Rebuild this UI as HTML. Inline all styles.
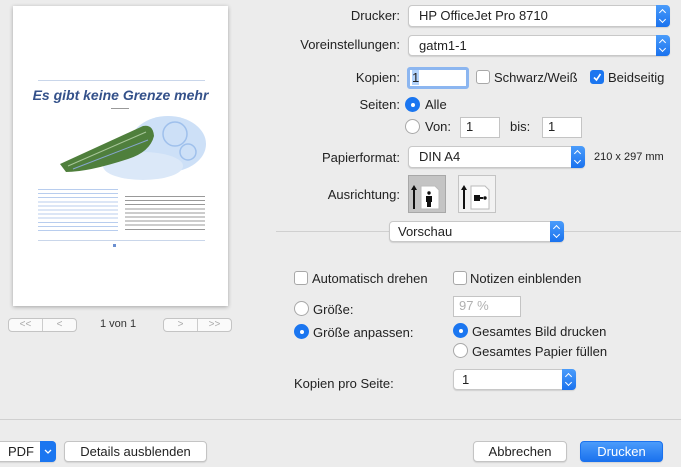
<!DOCTYPE html>
<html><head><meta charset="utf-8"><style>
*{box-sizing:border-box;margin:0;padding:0}
body{width:681px;height:467px;background:#ececec;font-family:"Liberation Sans",sans-serif;font-size:13px;color:#222;position:relative;overflow:hidden}
.a{position:absolute}
.lbl{position:absolute;text-align:right;white-space:nowrap}
.pop{position:absolute;background:#fff;border:1px solid #c8c8c8;border-radius:4px;box-shadow:0 1px 1px rgba(0,0,0,.12);padding-left:10px;line-height:19px;white-space:nowrap}
.pop .ar{position:absolute;right:-1px;top:-1px;bottom:-1px;width:14px;background:linear-gradient(#4a9cfb,#1a72ee);border-radius:0 4px 4px 0}
.pop .ar:before,.pop .ar:after{content:"";position:absolute;left:4px;width:4px;height:4px;border-left:1.3px solid #fff;border-top:1.3px solid #fff}
.pop .ar:before{top:5px;transform:rotate(45deg)}
.pop .ar:after{bottom:5px;transform:rotate(-135deg)}
.inp{position:absolute;background:#fff;border:1px solid #c4c4c4;padding-left:5px;line-height:18px}
.cb{position:absolute;width:14px;height:14px;border:1px solid #a8a8a8;border-radius:3px;background:#fff}
.cb.on{background:#1b76f0;border-color:#1b76f0}
.rd{position:absolute;width:15px;height:15px;border:1px solid #a8a8a8;border-radius:50%;background:#fff}
.rd.on{background:#1b76f0;border-color:#1b76f0}
.rd.on:after{content:"";position:absolute;left:4.5px;top:4.5px;width:4px;height:4px;border-radius:50%;background:#fff}
.btn{position:absolute;background:#fff;border:1px solid #c4c4c4;border-radius:4px;text-align:center;line-height:19px;box-shadow:0 1px 1px rgba(0,0,0,.1)}
.sep{position:absolute;height:1px;background:#d0d0d0}
.nav{position:absolute;height:14px;border:1px solid #c4c4c4;border-radius:4px;background:#fafafa;display:flex;color:#aaa;font-size:10px;line-height:12px}
.nav span{flex:1;text-align:center}
.nav span+span{border-left:1px solid #ccc}
</style></head><body>

<div class="a" style="left:13px;top:6px;width:215px;height:300px;background:#fff;box-shadow:0 1px 4px rgba(0,0,0,.3)">
 <div class="a" style="left:25px;top:74px;width:167px;height:1px;background:#c9d6ea"></div>
 <div class="a" style="left:0;width:215px;top:81px;text-align:center;color:#34518a;font-size:14px;font-weight:bold;font-style:italic">Es gibt keine Grenze mehr</div>
 <div class="a" style="left:98px;top:102px;width:18px;height:1px;background:#999"></div>
 <svg class="a" style="left:45px;top:108px" width="150" height="70">
  <ellipse cx="110" cy="30" rx="38" ry="28" fill="#cde0f7"/>
  <ellipse cx="85" cy="52" rx="40" ry="14" fill="#dbe8f8"/>
  <circle cx="117" cy="20" r="12" fill="none" stroke="#9fc0ec" stroke-width="1.5"/>
  <circle cx="130" cy="38" r="8" fill="none" stroke="#9fc0ec" stroke-width="1.5"/>
  <path d="M2 50 L85 12 Q95 10 96 22 Q92 38 70 45 Q30 58 8 58Z" fill="#4f7f3c"/>
  <path d="M10 52 L88 18" stroke="#a8c79a" stroke-width="1"/>
  <path d="M15 55 L90 26" stroke="#86a6d0" stroke-width="1"/>
 </svg>
 <div class="a" style="left:25px;top:183px;width:80px;height:45px;background:repeating-linear-gradient(#b8cdee 0 1px,transparent 1px 4.1px)"></div>
 <div class="a" style="left:112px;top:190px;width:80px;height:34px;background:repeating-linear-gradient(#999 0 1px,transparent 1px 4.1px)"></div>
 <div class="a" style="left:25px;top:234px;width:167px;height:1px;background:#c9d6ea"></div>
 <div class="a" style="left:100px;top:238px;width:3px;height:3px;background:#6b8fd0"></div>
</div>
<div class="nav" style="left:8px;top:318px;width:69px"><span>&lt;&lt;</span><span>&lt;</span></div>
<div class="a" style="left:100px;top:318px;font-size:11px;color:#333">1 von 1</div>
<div class="nav" style="left:163px;top:318px;width:69px"><span>&gt;</span><span>&gt;&gt;</span></div>

<div class="lbl" style="right:281px;top:8px">Drucker:</div>
<div class="pop" style="left:408px;top:5px;width:262px;height:22px">HP OfficeJet Pro 8710<div class="ar"></div></div>
<div class="lbl" style="right:281px;top:37px">Voreinstellungen:</div>
<div class="pop" style="left:408px;top:35px;width:262px;height:21px">gatm1-1<div class="ar"></div></div>

<div class="lbl" style="right:281px;top:70px">Kopien:</div>
<div class="inp" style="left:407px;top:67px;width:62px;height:22px;border:3px solid #8cb6f0;border-radius:3px;padding-left:2px;line-height:16px"><span style="background:#b3d3fb">1</span></div>
<div class="cb" style="left:476px;top:70px"></div>
<div class="a" style="left:494px;top:70px">Schwarz/Weiß</div>
<div class="cb on" style="left:590px;top:70px"><svg width="12" height="12" style="position:absolute;left:0;top:0"><path d="M3 6.5 L5.5 9 L9.5 3" stroke="#fff" stroke-width="1.6" fill="none"/></svg></div>
<div class="a" style="left:608px;top:70px">Beidseitig</div>

<div class="lbl" style="right:281px;top:97px">Seiten:</div>
<div class="rd on" style="left:405px;top:97px"></div>
<div class="a" style="left:425px;top:97px">Alle</div>
<div class="rd" style="left:405px;top:119px"></div>
<div class="a" style="left:425px;top:119px">Von:</div>
<div class="inp" style="left:460px;top:117px;width:40px;height:21px">1</div>
<div class="a" style="left:510px;top:119px">bis:</div>
<div class="inp" style="left:542px;top:117px;width:40px;height:21px">1</div>

<div class="lbl" style="right:281px;top:150px">Papierformat:</div>
<div class="pop" style="left:408px;top:146px;width:177px;height:22px">DIN A4<div class="ar"></div></div>
<div class="a" style="left:594px;top:151px;font-size:11px">210 x 297 mm</div>

<div class="lbl" style="right:281px;top:187px">Ausrichtung:</div>
<div class="a" style="left:408px;top:175px;width:38px;height:38px;background:#c4c4c4;border:1px solid #a8a8a8"></div>
<div class="a" style="left:458px;top:175px;width:38px;height:38px;background:#f2f2f2;border:1px solid #c4c4c4"></div>
<svg class="a" style="left:408px;top:175px" width="90" height="38">
 <path d="M6 13 L6 34" stroke="#111" stroke-width="2"/><path d="M3 15 L6 10 L9 15Z" fill="#111"/>
 <path d="M13 11 H27 L31 15 V34 H13Z" fill="#fff" stroke="#bbb"/>
 <circle cx="21" cy="18" r="1.7" fill="#111"/><path d="M18 21 H24 V27 H23 V32 H19 V27 H18Z" fill="#111"/>
 <path d="M56 13 L56 34" stroke="#111" stroke-width="2"/><path d="M53 15 L56 10 L59 15Z" fill="#111"/>
 <path d="M63 11 H77 L81 15 V34 H63Z" fill="#fff" stroke="#bbb"/>
 <path d="M66 20 H72 V26 H66Z M72 22 H75 V24 H72Z" fill="#111"/><circle cx="77" cy="23" r="1.7" fill="#111"/>
</svg>

<div class="sep" style="left:276px;top:231px;width:405px"></div>
<div class="pop" style="left:389px;top:221px;width:175px;height:21px;padding-left:8px">Vorschau<div class="ar"></div></div>

<div class="cb" style="left:294px;top:271px"></div>
<div class="a" style="left:312px;top:271px">Automatisch drehen</div>
<div class="cb" style="left:453px;top:271px"></div>
<div class="a" style="left:470px;top:271px">Notizen einblenden</div>

<div class="rd" style="left:294px;top:301px"></div>
<div class="a" style="left:313px;top:302px">Größe:</div>
<div class="inp" style="left:453px;top:296px;width:68px;height:21px;color:#b0b0b0">97 %</div>
<div class="rd on" style="left:294px;top:324px"></div>
<div class="a" style="left:313px;top:325px">Größe anpassen:</div>
<div class="rd on" style="left:453px;top:323px"></div>
<div class="a" style="left:472px;top:324px">Gesamtes Bild drucken</div>
<div class="rd" style="left:453px;top:343px"></div>
<div class="a" style="left:472px;top:344px">Gesamtes Papier füllen</div>

<div class="a" style="left:294px;top:376px">Kopien pro Seite:</div>
<div class="pop" style="left:453px;top:369px;width:123px;height:21px;padding-left:8px">1<div class="ar"></div></div>

<div class="sep" style="left:0;top:419px;width:681px"></div>
<div class="btn" style="left:-4px;top:441px;width:60px;height:21px;text-align:left;padding-left:11px">PDF<div class="ar" style="position:absolute;right:-1px;top:-1px;bottom:-1px;width:16px;background:#1b76f0;border-radius:0 4px 4px 0"><svg width="14" height="20"><path d="M5 9 L8 12 L11 9" stroke="#fff" stroke-width="1.3" fill="none"/></svg></div></div>
<div class="btn" style="left:64px;top:441px;width:143px;height:21px">Details ausblenden</div>
<div class="btn" style="left:473px;top:441px;width:94px;height:21px">Abbrechen</div>
<div class="btn" style="left:580px;top:441px;width:83px;height:21px;background:linear-gradient(#4b9cfb,#1b72ee);border-color:#1b72ee;color:#fff">Drucken</div>
</body></html>
